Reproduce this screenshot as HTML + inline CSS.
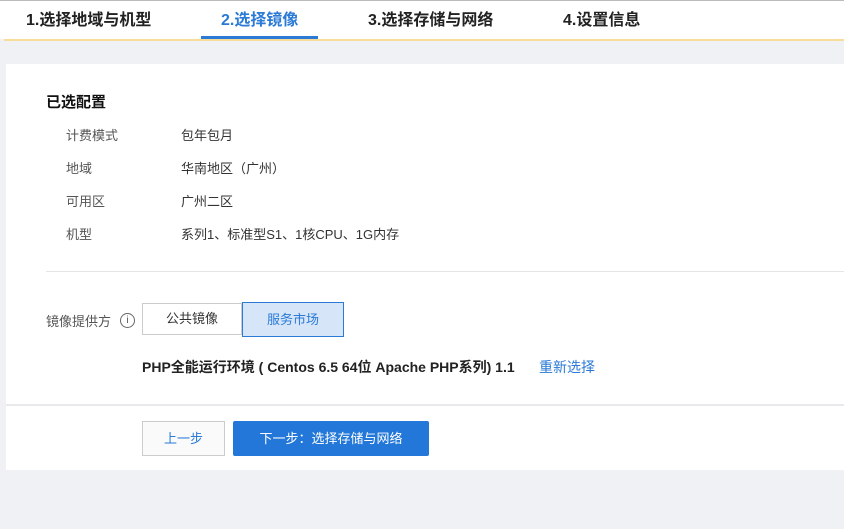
<!DOCTYPE html>
<html><head><meta charset="utf-8"><style>
body{margin:0;width:844px;height:529px;background:#f0f1f4;font-family:"Liberation Sans","Noto Sans CJK SC",sans-serif;position:relative;overflow:hidden;color:#333}
.top{position:absolute;left:0;top:0;width:844px;height:39px;background:#fff;border-top:1px solid #bbb;box-sizing:border-box}
.yl{position:absolute;left:4px;top:39px;width:840px;height:2px;background:#f7dc9a}
.t{position:absolute;top:6px;font-size:16px;font-weight:bold;color:#222}
.ul{position:absolute;left:201px;top:36px;width:117px;height:3px;background:#2a7ad6}
.panel{position:absolute;left:6px;top:64px;width:838px;height:406px;background:#fff}
.a{position:absolute;font-size:13px;color:#333}
.l{position:absolute;font-size:13px;color:#555}
</style></head><body>
<div class="top"></div>
<div class="t" style="left:26px">1.选择地域与机型</div>
<div class="t" style="left:221px;color:#2a7ad6">2.选择镜像</div>
<div class="t" style="left:368px">3.选择存储与网络</div>
<div class="t" style="left:563px">4.设置信息</div>
<div class="ul"></div>
<div class="yl"></div>
<div class="panel"></div>
<div class="a" style="left:46px;top:91px;font-size:15px;font-weight:bold;color:#111">已选配置</div>
<div class="l" style="left:66px;top:125px">计费模式</div><div class="a" style="left:181px;top:125px">包年包月</div>
<div class="l" style="left:66px;top:158px">地域</div><div class="a" style="left:181px;top:158px">华南地区（广州）</div>
<div class="l" style="left:66px;top:191px">可用区</div><div class="a" style="left:181px;top:191px">广州二区</div>
<div class="l" style="left:66px;top:224px">机型</div><div class="a" style="left:181px;top:224px">系列1、标准型S1、1核CPU、1G内存</div>
<div style="position:absolute;left:46px;top:271px;width:798px;height:1px;background:#e5e5e5"></div>
<div class="l" style="left:46px;top:311px">镜像提供方</div>
<div style="position:absolute;left:120px;top:313px;width:13px;height:13px;border:1px solid #666;border-radius:50%;font-size:10px;text-align:center;line-height:13px;color:#555">i</div>
<div style="position:absolute;left:142px;top:303px;width:100px;height:32px;border:1px solid #ccc;box-sizing:border-box;font-size:13px;text-align:center;line-height:30px">公共镜像</div>
<div style="position:absolute;left:242px;top:302px;width:102px;height:35px;border:1px solid #2a7ad6;background:#d6e6f8;box-sizing:border-box;font-size:13px;text-align:center;line-height:33px;color:#2a7ad6">服务市场</div>
<div class="a" style="left:142px;top:357px;font-size:14px;font-weight:bold;color:#222">PHP全能运行环境 ( Centos 6.5 64位 Apache PHP系列) 1.1</div>
<div class="a" style="left:539px;top:357px;font-size:14px;color:#2a7ad6">重新选择</div>
<div style="position:absolute;left:6px;top:404px;width:838px;height:2px;background:#e8e9ec"></div>
<div style="position:absolute;left:142px;top:421px;width:83px;height:35px;border:1px solid #ccc;background:#fafafa;box-sizing:border-box;font-size:13px;text-align:center;line-height:33px;color:#2a7ad6">上一步</div>
<div style="position:absolute;left:233px;top:421px;width:196px;height:35px;background:#2277d8;border-radius:2px;font-size:13px;text-align:center;line-height:35px;color:#fff">下一步：选择存储与网络</div>
</body></html>
